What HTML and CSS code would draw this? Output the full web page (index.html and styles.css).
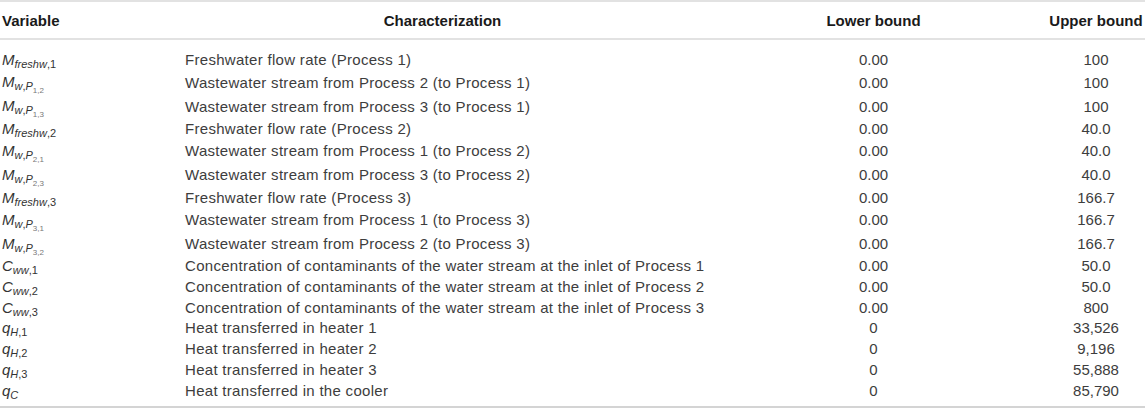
FILE: index.html
```html
<!DOCTYPE html>
<html>
<head>
<meta charset="utf-8">
<link rel="stylesheet" href="styles.css">
</head>
<body>
<table class="tbl">
  <colgroup>
    <col class="c1"><col class="c2"><col class="c3"><col class="c4">
  </colgroup>
  <thead>
    <tr>
      <th class="left">Variable</th>
      <th>Characterization</th>
      <th>Lower bound</th>
      <th>Upper bound</th>
    </tr>
  </thead>
  <tbody>
    <tr class="first"><td class="var"><i>M</i><sub><i>freshw</i>,1</sub></td><td class="txt">Freshwater flow rate (Process 1)</td><td>0.00</td><td>100</td></tr>
    <tr class="tall"><td class="var"><i>M</i><sub><i>w</i>,<i>P</i><sub>1,2</sub></sub></td><td class="txt">Wastewater stream from Process 2 (to Process 1)</td><td>0.00</td><td>100</td></tr>
    <tr class="tall"><td class="var"><i>M</i><sub><i>w</i>,<i>P</i><sub>1,3</sub></sub></td><td class="txt">Wastewater stream from Process 3 (to Process 1)</td><td>0.00</td><td>100</td></tr>
    <tr><td class="var"><i>M</i><sub><i>freshw</i>,2</sub></td><td class="txt">Freshwater flow rate (Process 2)</td><td>0.00</td><td>40.0</td></tr>
    <tr class="tall"><td class="var"><i>M</i><sub><i>w</i>,<i>P</i><sub>2,1</sub></sub></td><td class="txt">Wastewater stream from Process 1 (to Process 2)</td><td>0.00</td><td>40.0</td></tr>
    <tr class="tall"><td class="var"><i>M</i><sub><i>w</i>,<i>P</i><sub>2,3</sub></sub></td><td class="txt">Wastewater stream from Process 3 (to Process 2)</td><td>0.00</td><td>40.0</td></tr>
    <tr><td class="var"><i>M</i><sub><i>freshw</i>,3</sub></td><td class="txt">Freshwater flow rate (Process 3)</td><td>0.00</td><td>166.7</td></tr>
    <tr class="tall"><td class="var"><i>M</i><sub><i>w</i>,<i>P</i><sub>3,1</sub></sub></td><td class="txt">Wastewater stream from Process 1 (to Process 3)</td><td>0.00</td><td>166.7</td></tr>
    <tr class="tall"><td class="var"><i>M</i><sub><i>w</i>,<i>P</i><sub>3,2</sub></sub></td><td class="txt">Wastewater stream from Process 2 (to Process 3)</td><td>0.00</td><td>166.7</td></tr>
    <tr><td class="var"><i>C</i><sub><i>ww</i>,1</sub></td><td class="txt">Concentration of contaminants of the water stream at the inlet of Process 1</td><td>0.00</td><td>50.0</td></tr>
    <tr><td class="var"><i>C</i><sub><i>ww</i>,2</sub></td><td class="txt">Concentration of contaminants of the water stream at the inlet of Process 2</td><td>0.00</td><td>50.0</td></tr>
    <tr><td class="var"><i>C</i><sub><i>ww</i>,3</sub></td><td class="txt">Concentration of contaminants of the water stream at the inlet of Process 3</td><td>0.00</td><td>800</td></tr>
    <tr><td class="var"><i>q</i><sub><i>H</i>,1</sub></td><td class="txt">Heat transferred in heater 1</td><td>0</td><td>33,526</td></tr>
    <tr><td class="var"><i>q</i><sub><i>H</i>,2</sub></td><td class="txt">Heat transferred in heater 2</td><td>0</td><td>9,196</td></tr>
    <tr><td class="var"><i>q</i><sub><i>H</i>,3</sub></td><td class="txt">Heat transferred in heater 3</td><td>0</td><td>55,888</td></tr>
    <tr class="last"><td class="var"><i>q</i><sub><i>C</i></sub></td><td class="txt">Heat transferred in the cooler</td><td>0</td><td>85,790</td></tr>
  </tbody>
</table>
</body>
</html>
```

FILE: styles.css
```css
html, body {
  margin: 0;
  padding: 0;
  background: #ffffff;
}

.tbl {
  width: 1145px;
  table-layout: fixed;
  border-collapse: collapse;
  font-family: "Liberation Sans", Arial, sans-serif;
  font-size: 15px;
  color: #3d3d3d;
  border-top: 2px solid #e2e2e2;
  border-bottom: 3px solid #d4d4d4;
}

.c1 { width: 185px; }
.c2 { width: 515px; }
.c3 { width: 347px; }
.c4 { width: 98px; }

.tbl th {
  font-weight: bold;
  font-size: 15px;
  color: #1a1a1a;
  text-align: center;
  height: 36px;
  padding: 0;
  border-bottom: 2px solid #e2e2e2;
  white-space: nowrap;
}

.tbl th.left {
  text-align: left;
  padding-left: 2px;
}

.tbl td {
  padding: 0;
  height: 20.7px;
  line-height: 16px;
  text-align: center;
  white-space: nowrap;
  vertical-align: middle;
}

.tbl tr.tall td {
  height: 24px;
}

.tbl tr.first td {
  padding-top: 10px;
}

.tbl tr.last td {
  padding-bottom: 5px;
}

.tbl td.txt {
  text-align: left;
  letter-spacing: 0.3px;
}

.tbl td.var {
  text-align: left;
  padding-left: 2px;
  font-size: 15px;
  color: #333;
}

.var i {
  font-style: italic;
}

.var sub {
  font-size: 11px;
  line-height: 0;
  vertical-align: -3px;
}

.var sub sub {
  font-size: 8px;
  vertical-align: -3px;
  color: #777;
}
```
